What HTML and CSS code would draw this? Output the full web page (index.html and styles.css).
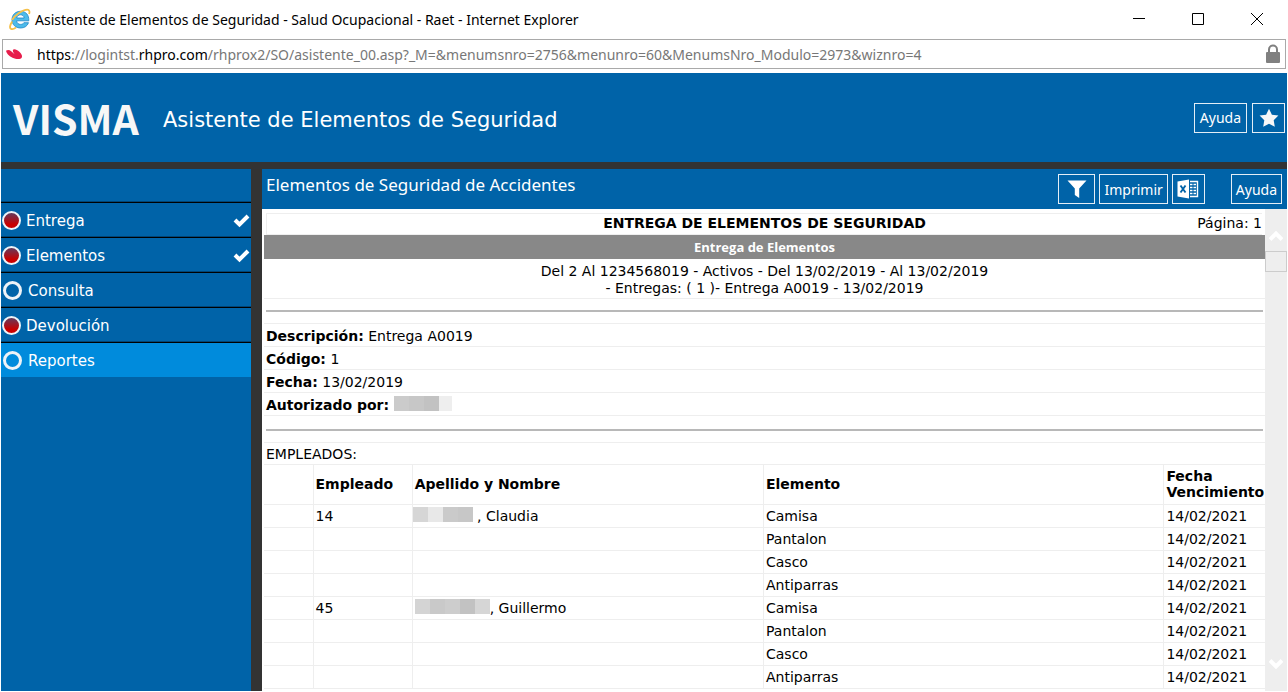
FILE: index.html
```html
<!DOCTYPE html>
<html lang="es">
<head>
<meta charset="utf-8">
<title>Asistente de Elementos de Seguridad</title>
<link rel="stylesheet" href="styles.css">
</head>
<body>
<div class="window">
  <header class="titlebar">
    <svg class="ie-icon" viewBox="0 0 22 22" aria-hidden="true">
      <path d="M19.800 12.800H7.600c.2 2.300 1.800 3.600 4 3.600 1.500 0 2.600-.6 3.300-1.700h4.600c-1.100 3.400-4.100 5.300-7.800 5.300-5.100 0-8.700-3.300-8.700-8.300 0-4.900 3.600-8.400 8.600-8.400 5.300 0 8.500 3.600 8.200 9.500zM15.200 10c-.2-2-1.600-3.200-3.600-3.200S8.100 8 7.700 10z" fill="#4dbbea" stroke="#1f86c7" stroke-width=".8"/>
      <path d="M3.200 13.500C.9 17 .3 20.200 2 20.900c1.300.6 3.200-.2 5-1.500M3 12C6 7 13.500 1.800 18.200 1.700c2.300 0 2.700 1.900 1.900 4.300" fill="none" stroke="#f5c04a" stroke-width="1.800"/>
    </svg>
    <span class="window-title">Asistente de Elementos de Seguridad - Salud Ocupacional - Raet - Internet Explorer</span>
    <div class="window-controls">
      <button type="button" aria-label="Minimizar"><svg viewBox="0 0 14 14"><path d="M1 6.500h12"/></svg></button>
      <button type="button" aria-label="Maximizar"><svg viewBox="0 0 14 14"><path d="M1.500 1.500h11v11h-11z"/></svg></button>
      <button type="button" aria-label="Cerrar"><svg viewBox="0 0 14 14"><path d="M1 1l12 12M13 1L1 13"/></svg></button>
    </div>
  </header>

  <div class="addressbar">
    <svg class="site-icon" viewBox="0 0 18 12" aria-hidden="true"><path d="M1 2.800C2.500 1.700 4.600 1.900 6.200 3.200L9.600 6.200C8.300 4.400 7.600 3 7.900 1.900c.4-1 2.300-.9 4.300.3 3.600 2 5.600 5.300 4.600 7.300-1.100 2-5.300 2.100-9.300.2C3.700 8 1.300 5.200 1 2.800z" fill="#e71d4b"/></svg>
    <span class="url"><b>https</b>://logintst.<b>rhpro.com</b>/rhprox2/SO/asistente_00.asp?_M=&amp;menumsnro=2756&amp;menunro=60&amp;MenumsNro_Modulo=2973&amp;wiznro=4</span>
    <svg class="lock-icon" viewBox="0 0 16 20" aria-hidden="true"><path d="M4 9V5.500a4 4 0 0 1 8 0V9" fill="none" stroke="#808080" stroke-width="2"/><rect x="1" y="8" width="14" height="11" rx="1" fill="#808080"/></svg>
  </div>

  <div class="app">
    <header class="banner">
      <span class="logo">VISMA</span>
      <h1>Asistente de Elementos de Seguridad</h1>
      <div class="banner-actions">
        <button type="button" class="btn">Ayuda</button>
        <button type="button" class="btn btn-icon" aria-label="Favoritos"><svg class="star" viewBox="0 0 20 20"><path d="M10 .8l2.900 5.900 6.500.9-4.700 4.600 1.100 6.500-5.800-3-5.800 3 1.100-6.500L.6 7.600l6.500-.9z" fill="#f7f7f7"/></svg></button>
      </div>
    </header>

    <div class="panels">
      <nav class="sidebar">
        <a href="#" class="step"><span class="dot done"></span>Entrega<svg class="check" viewBox="0 0 17 14"><path d="M2 6l4.500 4.500L15 2" /></svg></a>
        <a href="#" class="step"><span class="dot done"></span>Elementos<svg class="check" viewBox="0 0 17 14"><path d="M2 6l4.500 4.500L15 2" /></svg></a>
        <a href="#" class="step open"><span class="dot"></span>Consulta</a>
        <a href="#" class="step"><span class="dot done"></span>Devolución</a>
        <a href="#" class="step open active"><span class="dot"></span>Reportes</a>
      </nav>

      <main class="content">
        <div class="toolbar">
          <h2>Elementos de Seguridad de Accidentes</h2>
          <div class="tools">
            <button type="button" class="btn btn-filter" aria-label="Filtrar"><svg class="funnel" viewBox="0 0 20 18"><path d="M.5.500h19l-7.300 8V18l-4.400-3V8.500z" fill="#fff"/></svg></button>
            <button type="button" class="btn">Imprimir</button>
            <button type="button" class="btn btn-icon" aria-label="Exportar a Excel"><svg class="excel" viewBox="0 0 22 20"><path d="M.5 2.500L12 .5v19L.5 17.500z" fill="#fff"/><path d="M13 2.500h7.500v15H13" fill="none" stroke="#fff" stroke-width="1.400"/><path d="M13 5.500h2.500M16.500 5.500H19M13 8.500h2.500M16.500 8.500H19M13 11.500h2.500M16.500 11.500H19M13 14.500h2.500M16.500 14.500H19" stroke="#fff" stroke-width="1.700"/><path d="M3.500 6.500l5 7M8.500 6.500l-5 7" stroke="#0063a8" stroke-width="1.900"/></svg></button>
            <button type="button" class="btn btn-help">Ayuda</button>
          </div>
        </div>

        <div class="viewport">
          <article class="report">
            <div class="page-head"><strong>ENTREGA DE ELEMENTOS DE SEGURIDAD</strong><span>Página: 1</span></div>
            <h3>Entrega de Elementos</h3>
            <p class="criteria">Del 2 Al 1234568019 - Activos - Del 13/02/2019 - Al 13/02/2019<br>- Entregas: ( 1 )- Entrega A0019 - 13/02/2019</p>
            <div class="rule"><hr></div>
            <p class="line"><b>Descripción:</b> Entrega A0019</p>
            <p class="line"><b>Código:</b> 1</p>
            <p class="line"><b>Fecha:</b> 13/02/2019</p>
            <p class="line"><b>Autorizado por:</b> <span class="mask mask-a"></span></p>
            <div class="rule rule-wide"><hr></div>
            <p class="line line-title">EMPLEADOS:</p>
            <table>
              <colgroup><col class="c-gap"><col class="c-id"><col class="c-name"><col class="c-item"><col class="c-date"></colgroup>
              <thead><tr><th></th><th>Empleado</th><th>Apellido y Nombre</th><th>Elemento</th><th>Fecha Vencimiento</th></tr></thead>
              <tbody>
                <tr><td></td><td>14</td><td class="flush"><span class="mask mask-b"></span> , Claudia</td><td>Camisa</td><td>14/02/2021</td></tr>
                <tr><td></td><td></td><td></td><td>Pantalon</td><td>14/02/2021</td></tr>
                <tr><td></td><td></td><td></td><td>Casco</td><td>14/02/2021</td></tr>
                <tr><td></td><td></td><td></td><td>Antiparras</td><td>14/02/2021</td></tr>
                <tr><td></td><td>45</td><td><span class="mask mask-c"></span>, Guillermo</td><td>Camisa</td><td>14/02/2021</td></tr>
                <tr><td></td><td></td><td></td><td>Pantalon</td><td>14/02/2021</td></tr>
                <tr><td></td><td></td><td></td><td>Casco</td><td>14/02/2021</td></tr>
                <tr><td></td><td></td><td></td><td>Antiparras</td><td>14/02/2021</td></tr>
              </tbody>
            </table>
          </article>
          <div class="scrollbar">
            <button type="button" aria-label="Subir"><svg viewBox="0 0 14 12"><path d="M1 9.500l6-6 6 6"/></svg></button>
            <div class="thumb"></div>
            <button type="button" class="down" aria-label="Bajar"><svg viewBox="0 0 14 12"><path d="M1 2.500l6 6 6-6"/></svg></button>
          </div>
        </div>
      </main>
    </div>
  </div>
</div>
</body>
</html>
```
FILE: styles.css
```css
* { box-sizing: border-box; }

body {
  margin: 0;
  background: #fff;
  color: #000;
  font-family: "DejaVu Sans", sans-serif;
  font-size: 14px;
}

h1, h2, h3, p { margin: 0; font-weight: normal; }
button { margin: 0; padding: 0; border: 0; background: none; color: inherit; font: inherit; }
svg { display: block; flex: none; }

.window { display: flex; flex-direction: column; height: 100vh; }

/* Browser chrome */
.titlebar { display: flex; align-items: center; height: 38px; margin-bottom: 1px; padding: 0 24px 0 9px; font-family: "Noto Sans", sans-serif; }
.ie-icon { width: 22px; height: 22px; margin-right: 4px; }
.window-title { flex: 1; font-size: 14px; white-space: nowrap; }
.window-controls { display: flex; gap: 45px; }
.window-controls svg { width: 14px; height: 14px; fill: none; stroke: #000; }

.addressbar {
  display: flex;
  align-items: center;
  height: 30px;
  margin: 0 2px 4px;
  padding: 0 4px 0 2px;
  border: 1px solid #a9a9a9;
  font-family: "Noto Sans", sans-serif;
}
.site-icon { width: 18px; height: 12px; }
.url { flex: 1; padding-left: 14px; color: #777; font-size: 14px; white-space: nowrap; }
.url b { color: #000; font-weight: normal; }
.lock-icon { width: 16px; height: 20px; }

/* Application shell */
.app { display: flex; flex: 1; flex-direction: column; min-height: 0; margin: 0 1px 1px; background: #0063a8; color: #fff; }
.banner { display: flex; align-items: center; height: 89px; padding: 0 2px 0 12px; }
.logo { width: 150px; color: #f7f7f7; font: bold 41px/1 "Noto Sans CJK SC", sans-serif; }
.banner h1 { flex: 1; padding-top: 4px; font-size: 21px; }
.banner-actions { display: flex; gap: 5px; }

.btn {
  display: flex;
  align-items: center;
  justify-content: center;
  height: 30px;
  padding: 0 5px;
  border: 1px solid #e4eef6;
  color: #fff;
  font: 14px "Noto Sans", sans-serif;
}
.btn-icon { width: 33px; }
.btn-filter { width: 37px; }
.tools .btn { padding: 0 4px; }
.tools .btn-help { margin-left: 22px; }
.star { width: 20px; height: 20px; }
.funnel { width: 20px; height: 18px; }
.excel { width: 22px; height: 20px; }

.panels { display: flex; flex: 1; min-height: 0; border-top: 7px solid #333; }
.sidebar { width: 250px; padding-top: 33px; }
.step {
  display: flex;
  align-items: center;
  height: 35px;
  padding: 1px 1px 0;
  border-top: 1px solid #000;
  box-shadow: 0 -1px #004576;
  color: #fff;
  font-size: 15px;
  text-decoration: none;
}
.step.open { padding-left: 2px; }
.step.active { background: #008bdc; background-clip: padding-box; }
.dot { width: 19px; height: 19px; margin-right: 5px; border: 2px solid #eef3f7; border-radius: 50%; }
.dot.done { background: linear-gradient(#633a5c, #c90000 75%); }
.step.open .dot { margin-right: 6px; border-width: 3px; }
.check { width: 17px; height: 14px; margin-left: auto; fill: none; stroke: #fff; stroke-width: 4; }

.content { display: flex; flex: 1; flex-direction: column; min-width: 0; border-left: 11px solid #333; }
.toolbar { display: flex; align-items: center; height: 40px; padding: 0 5px 0 4px; }
.toolbar h2 { flex: 1; padding-bottom: 8px; font: 17px/24px "Noto Sans", sans-serif; }
.tools { display: flex; gap: 4px; }

/* Report */
.viewport { display: flex; flex: 1; min-height: 0; background: #fff; color: #000; }
.report { flex: 1; min-width: 0; padding: 4px 0 0 2px; overflow: hidden; }
.page-head {
  display: grid;
  grid-template-columns: 1fr auto 1fr;
  height: 22px;
  margin: 0 3px 0 2px;
  border: solid #eee;
  border-width: 1px 0 1px 1px;
  line-height: 18px;
}
.page-head strong { grid-column: 2; }
.page-head span { text-align: right; }
.report h3 { height: 24px; background: #888; color: #fff; font: bold 13px/24px "Open Sans", sans-serif; text-align: center; }
.criteria { height: 40px; padding-top: 4px; border-bottom: 1px solid #eee; line-height: 17px; text-align: center; }
.rule { height: 25px; padding: 11px 2px 0; border-bottom: 1px solid #eee; }
.rule-wide { height: 27px; padding-top: 13px; }
.rule hr { height: 2px; margin: 0; border: 0; background: #b8b8b8; }
.line { height: 23px; padding: 1px 2px 0; border-bottom: 1px solid #eee; line-height: 22px; white-space: nowrap; }
.line-title { height: 22px; padding-top: 0; }

table { width: 100%; border-collapse: collapse; table-layout: fixed; }
.c-gap { width: 4.900%; }
.c-id { width: 9.900%; }
.c-name { width: 35.100%; }
.c-item { width: 40%; }
th, td { height: 23px; padding: 0 2px; border: solid #eee; border-width: 0 0 1px 1px; line-height: 16px; text-align: left; }
th:first-child, td:first-child { border-left: 0; }
th { height: 39px; }
td.flush { padding-left: 0; }

/* Redacted names */
.mask { display: inline-block; height: 15px; vertical-align: -1px; }
.mask-a { width: 58px; background: linear-gradient(90deg, #cbcbcb 15px, #c7c7c7 15px 30px, #c2c2c2 30px 45px, #eee 45px); }
.mask-b { width: 60px; background: linear-gradient(90deg, #d6d6d6 15px, #e8e8e8 15px 30px, #cacaca 30px 45px, #c7c7c7 45px); }
.mask-c { width: 75px; background: linear-gradient(90deg, #d4d4d4 15px, #c9c9c9 15px 30px, #cdcdcd 30px 45px, #c2c2c2 45px 60px, #d6d6d6 60px); }

.scrollbar { display: flex; flex-direction: column; width: 22px; padding: 16px 0; background: #eee; }
.scrollbar button { display: flex; align-items: center; justify-content: center; height: 22px; }
.scrollbar svg { width: 14px; height: 12px; fill: none; stroke: #fff; stroke-width: 4; }
.scrollbar .down { margin-top: auto; }
.thumb { height: 21px; margin-top: 4px; border: 1px solid #ccc; }
```
